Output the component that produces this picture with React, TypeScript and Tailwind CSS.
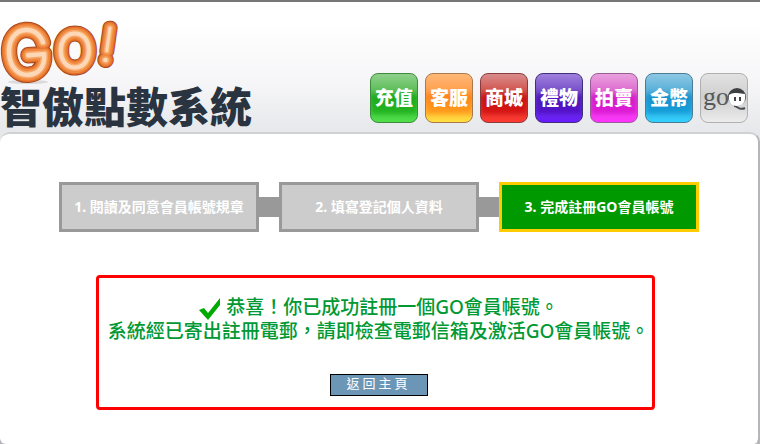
const apps = [
  { label: "充值", box: "border-[#3c8a3c] from-[#8fd08c] via-[#3fb53a] to-[#4fe04a]", glow: "bg-[#0aa30a]/60" },
  { label: "客服", box: "border-[#a8794c] from-[#ffb878] via-[#ff9430] to-[#ffe040]", glow: "bg-[#ff7800]/50" },
  { label: "商城", box: "border-[#8a3c3c] from-[#d88c8c] via-[#cc3030] to-[#ff3a30]", glow: "bg-[#c80000]/60" },
  { label: "禮物", box: "border-[#40307c] from-[#a080dc] via-[#6838c0] to-[#6a18ff]", glow: "bg-[#4400b8]/60" },
  { label: "拍賣", box: "border-[#9a5c98] from-[#e8a0dc] via-[#d850cc] to-[#ff30ff]", glow: "bg-[#d000c8]/60" },
  { label: "金幣", box: "border-[#4c7c94] from-[#8cc8e4] via-[#3ca4d4] to-[#30d0ff]", glow: "bg-[#0088cc]/60" },
];

const steps = [
  { label: "1. 閱讀及同意會員帳號規章", active: false },
  { label: "2. 填寫登記個人資料", active: false },
  { label: "3. 完成註冊GO會員帳號", active: true },
];

const letters = [
  { char: "G", x: 4, y: 57, size: 62, rotate: "rotate(-4 27 36)", trim: 0 },
  { char: "O", x: 57, y: 50, size: 48, rotate: "rotate(0)", trim: 0 },
  { char: "!", x: 101, y: 43, size: 46, rotate: "rotate(8 108 30)", trim: 1 },
];

// Strokes stacked from the dark rim to the highlight give the inflated look
const tubes = [
  { color: "#a8481c", width: 15 },
  { color: "#e2702a", width: 13 },
  { color: "#f08a40", width: 10 },
  { color: "#f8a868", width: 6 },
  { color: "#fdd8b8", width: 3 },
];

function GoLogo() {
  return (
    <svg viewBox="0 0 124 68" className="block h-[68px] w-[124px] overflow-visible" role="img" aria-label="GO!">
      <ellipse cx="28" cy="64" rx="20" ry="2" fill="#8a8a8a" opacity="0.25" />
      {letters.map((letter) => (
        <g key={letter.char}>
          {tubes.map((tube) => (
            <text
              key={tube.color}
              x={letter.x}
              y={letter.y}
              fontSize={letter.size}
              transform={letter.rotate}
              fontFamily="Inter, sans-serif"
              fontWeight="100"
              fill={tube.color}
              stroke={tube.color}
              strokeWidth={tube.width - letter.trim}
              strokeLinejoin="round"
              strokeLinecap="round"
            >
              {letter.char}
            </text>
          ))}
        </g>
      ))}
    </svg>
  );
}

function GoqLogo() {
  return (
    <svg viewBox="0 0 46 48" className="block h-full w-full" aria-hidden="true">
      <text x="2" y="31" fontSize="26" fontFamily="'Liberation Serif', serif" fill="#55595c">
        go
      </text>
      <path d="M33 32c4 0 5 5 11 2" fill="none" stroke="#4a4c4e" strokeWidth="2" />
      <circle cx="36" cy="23" r="9" fill="#3e4042" />
      <path d="M28 21c3-2 5-2 8-2s5 1 8 1c1 8-2 12-8 12s-9-4-8-11z" fill="#fff" />
      <path d="M34 23v4M39 23v4" stroke="#444" strokeWidth="2" />
    </svg>
  );
}

export default function App() {
  return (
    <div className="flex min-h-screen flex-col bg-[#b4b6b9] font-['Noto_Sans','Noto_Sans_CJK_TC',sans-serif]">
      <header className="-mb-3 flex items-start justify-between border-t-2 border-[#777] bg-linear-to-b from-white from-15% via-[#f5f5f7] via-60% to-[#e2e4e7] pr-3 pb-3">
        <div className="pt-4">
          <GoLogo />
          <h1 className="-mt-1 h-[50px] pt-[2px] text-[42px] leading-[46px] font-black whitespace-nowrap text-[#2a3340]">
            智傲點數系統
          </h1>
        </div>

        <nav className="flex gap-[7px] pt-[71px]">
          {apps.map((app) => (
            <a
              key={app.label}
              href="#"
              className={`relative flex h-[50px] w-12 items-center justify-center overflow-hidden rounded-lg border bg-linear-to-b ${app.box}`}
            >
              <span className={`absolute inset-x-0 top-5 bottom-2 blur-[2px] ${app.glow}`} />
              <span className="relative text-[19px] leading-6 font-black whitespace-nowrap text-white">
                {app.label}
              </span>
            </a>
          ))}
          <a
            href="#"
            aria-label="goQ"
            className="h-[50px] w-12 rounded-lg border border-[#b0b0b0] bg-linear-to-b from-[#e2e2e2] via-[#cecece] to-[#ececec]"
          >
            <GoqLogo />
          </a>
        </nav>
      </header>

      <main className="flex-1 rounded-t-[10px] rounded-b-md border-t-2 border-r-2 border-t-[#cfd1d3] border-r-[#b4b6b9] bg-white pt-12 pb-8">
        <ol className="flex items-center justify-center text-sm font-bold text-white">
          {steps.map((step, i) => (
            <li key={step.label} className="flex items-center">
              {i > 0 && <span className="h-5 w-5 bg-[#999]" />}
              <span
                className={`flex h-[50px] w-[200px] items-center justify-center border-3 whitespace-nowrap ${
                  step.active ? "border-[#fc0] bg-[#090]" : "border-[#999] bg-[#ccc]"
                }`}
              >
                {step.label}
              </span>
            </li>
          ))}
        </ol>

        <section className="mr-[103px] ml-24 mt-[43px] flex flex-col items-center rounded-[4px] border-3 border-[#f00] pt-[18px] pb-[11px] pl-1.5">
          <p className="text-center text-[19px] leading-[22px] font-medium whitespace-nowrap text-[#093]">
            <svg viewBox="0 0 24 22" className="mr-1 inline h-[22px] w-6 align-middle" aria-hidden="true">
              <path d="M1 12l5-2 4 5L22 0v7L10 22z" fill="#0a0" />
            </svg>
            恭喜！你已成功註冊一個GO會員帳號。
            <br />
            系統經已寄出註冊電郵，請即檢查電郵信箱及激活GO會員帳號。
          </p>
          <button className="mt-8 flex h-[22px] w-[98px] items-start justify-center border border-black bg-[#6c96b6] text-[13px] leading-4 tracking-[3px] text-white">
            返回主頁
          </button>
        </section>
      </main>
    </div>
  );
}
